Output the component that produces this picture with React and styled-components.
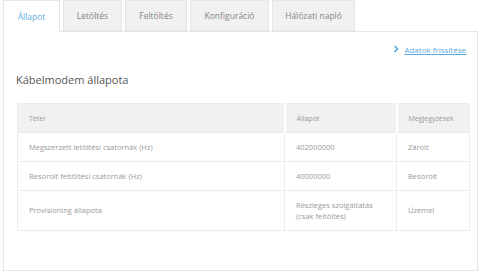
import styled, { createGlobalStyle } from "styled-components";

const GlobalStyle = createGlobalStyle`
    body {
        margin: 0;
        background: #ffffff;
        font-family: "Open Sans", "Liberation Sans", sans-serif;
    }
`;

const Page = styled.div`
    width: 480px;
    height: 272px;
    padding: 0 2px 0 3px;
    box-sizing: border-box;
    display: flex;
    flex-direction: column;
`;

const TabBar = styled.ul`
    display: flex;
    gap: 3px;
    margin: 0;
    padding: 0;
    list-style: none;
    height: 31px;
    position: relative;
    z-index: 1;
`;

const Tab = styled.li`
    width: ${({ w }) => w}px;
    height: ${({ active }) => (active ? "32px" : "31px")};
    box-sizing: border-box;
    display: flex;
    align-items: center;
    justify-content: center;
    font-size: 8.5px;
    color: ${({ active }) => (active ? "#63aee2" : "#858585")};
    background: ${({ active }) => (active ? "#ffffff" : "#f1f1f1")};
    border: 1px solid #e6e6e6;
    border-bottom: ${({ active }) => (active ? "none" : "1px solid #e6e6e6")};
`;

const Panel = styled.div`
    flex: 1;
    border: 1px solid #e6e6e6;
    margin-bottom: 1px;
    padding: 10px 10px 0 12px;
    display: flex;
    flex-direction: column;
`;

const LinkRow = styled.div`
    display: flex;
    justify-content: flex-end;
    align-items: center;
    gap: 5px;
    height: 14px;
    padding-right: 1px;
`;

const Link = styled.a`
    font-size: 8px;
    color: #58a8de;
    text-decoration: underline;
`;

const Title = styled.h2`
    margin: 16px 0 0 0;
    font-size: 11px;
    font-weight: 400;
    color: #555555;
    height: 31px;
`;

const Table = styled.table`
    margin-left: 1px;
    width: 452px;
    table-layout: fixed;
    border-collapse: collapse;
    border: 1px solid #ececec;
    font-size: 7.5px;
    color: #9a9a9a;
`;

const HeadCell = styled.th`
    box-sizing: border-box;
    height: 29px;
    padding: 0 11px;
    background: #f1f1f1;
    border-left: 2px solid #ffffff;
    font-weight: 400;
    font-size: 7px;
    text-align: left;
    width: ${({ w }) => w}px;
    &:first-child {
        border-left: none;
    }
`;

const Cell = styled.td`
    height: ${({ tall }) => (tall ? "39px" : "28px")};
    padding: 0 11px;
    border-top: 1px solid #ececec;
    border-left: 1px solid #ececec;
    line-height: 11px;
`;

const rows = [
    ["Megszerzett letöltési csatornák (Hz)", "402000000", "Zárolt"],
    ["Besorolt feltöltési csatornák (Hz)", "40000000", "Besorolt"],
    ["Provisioning állapota", "Részleges szolgáltatás\n(csak feltöltés)", "Üzemel"],
];

function Chevron() {
    return (
        <svg width="6" height="8" viewBox="0 0 6 8">
            <path d="M1.5 1 L4.5 4 L1.5 7" fill="none" stroke="#58a8de" strokeWidth="1.6" />
        </svg>
    );
}

function App() {
    const tabs = [
        ["Állapot", 57],
        ["Letöltés", 59],
        ["Feltöltés", 62],
        ["Konfiguráció", 79],
        ["Hálózati napló", 83],
    ];

    return (
        <Page>
            <GlobalStyle />
            <TabBar>
                {tabs.map(([name, w], i) => (
                    <Tab key={name} w={w} active={i === 0}>
                        {name}
                    </Tab>
                ))}
            </TabBar>
            <Panel>
                <LinkRow>
                    <Chevron />
                    <Link>Adatok frissítése</Link>
                </LinkRow>
                <Title>Kábelmodem állapota</Title>
                <Table>
                    <thead>
                        <tr>
                            <HeadCell w={267}>Tétel</HeadCell>
                            <HeadCell w={112}>Állapot</HeadCell>
                            <HeadCell w={73}>Megjegyzések</HeadCell>
                        </tr>
                    </thead>
                    <tbody>
                        {rows.map((r, i) => (
                            <tr key={r[0]}>
                                {r.map((c, j) => (
                                    <Cell key={j} tall={i === 2}>
                                        {c.split("\n").map((line, k) => (
                                            <div key={k}>{line}</div>
                                        ))}
                                    </Cell>
                                ))}
                            </tr>
                        ))}
                    </tbody>
                </Table>
            </Panel>
        </Page>
    );
}

export default App;
